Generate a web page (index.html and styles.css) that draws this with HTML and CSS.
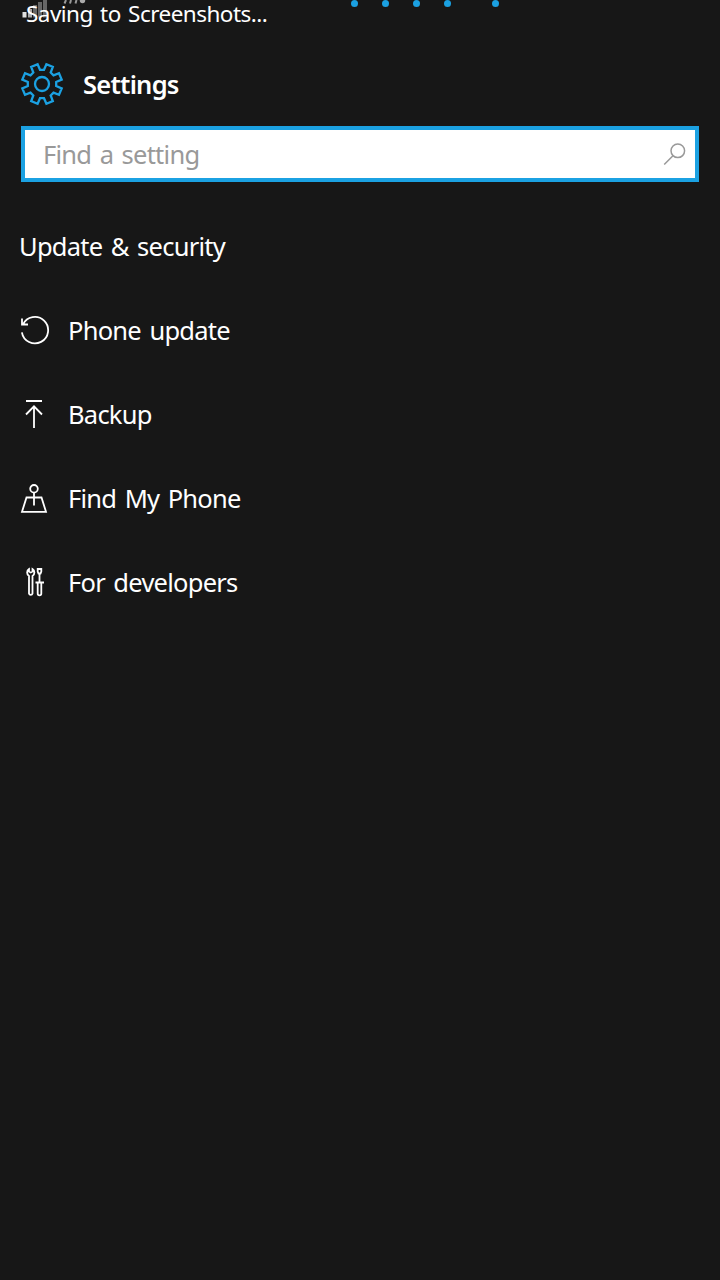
FILE: index.html
```html
<!DOCTYPE html>
<html lang="en">
<head>
    <meta charset="UTF-8">
    <meta name="viewport" content="width=device-width, initial-scale=1.0">
    <title>Settings</title>
    <link rel="stylesheet" href="styles.css">
</head>
<body>

<!-- Status bar with the toast sliding over it -->
<div class="status-bar">
    <svg class="signal" width="90" height="28" viewBox="0 0 90 28">
        <rect x="22.500" y="12" width="4" height="5.500" fill="#e0e0e0"/>
        <rect x="28" y="9" width="4" height="8.500" fill="#aaa"/>
        <rect x="33" y="5" width="4" height="12.500" fill="#666"/>
        <rect x="38" y="2" width="4" height="15.500" fill="#666"/>
        <rect x="43" y="0" width="4" height="17.500" fill="#666"/>
        <path d="M66 0l-1.500 3.500M71 0l-1 3.500M76.500 0l-1 3.500" fill="none" stroke="#999" stroke-width="2"/>
        <circle cx="82.500" cy="0.500" r="2.700" fill="#aaa"/>
    </svg>
    <span class="toast">Saving to Screenshots...</span>
    <span class="dot dot1"></span>
    <span class="dot dot2"></span>
    <span class="dot dot3"></span>
    <span class="dot dot4"></span>
    <span class="dot dot5"></span>
</div>

<header>
    <svg class="gear" width="44" height="44" viewBox="-22 -22 44 44">
        <path d="M2-14.200L4.400-19.700L10.800-17L8.700-11.500L11.500-8.700L17-10.800L19.700-4.400L14.200-2V2L19.700 4.400L17 10.800L11.500 8.700L8.700 11.500L10.800 17L4.400 19.700L2 14.200H-2L-4.400 19.700L-10.800 17L-8.700 11.500L-11.500 8.700L-17 10.800L-19.700 4.400L-14.200 2V-2L-19.700-4.400L-17-10.800L-11.500-8.700L-8.700-11.500L-10.800-17L-4.400-19.700L-2-14.200Z"/>
        <circle r="7"/>
    </svg>
    <h1>Settings</h1>
</header>

<div class="search">
    <input type="text" placeholder="Find a setting">
    <svg width="24" height="24" viewBox="0 0 24 24">
        <circle cx="14.800" cy="8.800" r="6.800"/>
        <path d="M10 13.700L1.200 22.500"/>
    </svg>
</div>

<h2>Update &amp; security</h2>

<ul class="menu">
    <li>
        <svg width="30" height="30" viewBox="0 0 30 30">
            <path d="M3 9.500A13.200 13.200 0 1 1 1.900 17.300M2 3.500V9.500H8"/>
        </svg>
        <span>Phone update</span>
    </li>
    <li>
        <svg width="30" height="30" viewBox="0 0 30 30">
            <path d="M6 2H22M14 7V29M6 15.500L14 7.300L22 15.500"/>
        </svg>
        <span>Backup</span>
    </li>
    <li>
        <svg width="30" height="30" viewBox="0 0 30 30">
            <circle cx="14" cy="5.800" r="3.800"/>
            <path d="M14 9.800V22.500M14 14.500H6.500L2 28.800H26L21.500 14.500H14"/>
        </svg>
        <span>Find My Phone</span>
    </li>
    <li>
        <svg width="30" height="30" viewBox="0 0 30 30">
            <path d="M9 2C6.500 3.500 6.500 7.500 9 9V26.500A1.800 1.800 0 0 0 12.500 26.500V9C15 7.500 15 3.500 12.500 2V4.500L10.750 5.500L9 4.500Z"/>
            <path d="M17.700 2H21.300V4.500L20.500 6.500H18.500L17.700 4.500ZM19.500 6.500V15.500M15.500 15.500H24M17.700 15.500V26.500A1.800 1.800 0 0 0 21.300 26.500V15.500"/>
        </svg>
        <span>For developers</span>
    </li>
</ul>

</body>
</html>
```

FILE: styles.css
```css
* {
    box-sizing: border-box;
}
body {
    font-family: "Noto Sans", "Open Sans", sans-serif;
    margin: 0;
    min-height: 1280px;
    background-color: #171717;
    color: white;
    font-size: 25.5px;
    letter-spacing: -0.75px;
    word-spacing: 2.5px;
}
.status-bar {
    position: relative;
    height: 60px;
}
.signal {
    position: absolute;
    left: 0;
    top: 0;
}
.toast {
    position: absolute;
    left: 26px;
    top: 0;
    font-size: 22.5px;
    line-height: 28px;
    letter-spacing: -0.53px;
    word-spacing: 2px;
    white-space: nowrap;
}
.dot {
    position: absolute;
    top: 0;
    width: 7px;
    height: 7px;
    border-radius: 50%;
    background-color: #1ba1e2;
}
.dot1 { left: 351px; }
.dot2 { left: 382px; }
.dot3 { left: 413px; }
.dot4 { left: 444px; }
.dot5 { left: 492px; }
header {
    display: flex;
    align-items: center;
    height: 48px;
    padding-left: 20px;
}
.gear {
    fill: none;
    stroke: #1ba1e2;
    stroke-width: 2.3;
}
h1 {
    margin: 0 0 0 19px;
    font-size: 25.5px;
    font-weight: 600;
    line-height: 46px;
    letter-spacing: -0.75px;
}
.search {
    display: flex;
    align-items: center;
    height: 56px;
    margin: 18px 21px 0;
    padding: 0 8px 0 18px;
    border: 4px solid #1ba1e2;
    background-color: white;
}
.search input {
    flex: 1;
    min-width: 0;
    padding: 0 0 1px;
    border: none;
    outline: none;
    font: inherit;
    letter-spacing: inherit;
    word-spacing: inherit;
    color: #333;
}
.search input::placeholder {
    color: #999;
}
.search svg {
    fill: none;
    stroke: #999;
    stroke-width: 1.5;
}
h2 {
    margin: 43px 0 0 19px;
    font-size: 25.5px;
    font-weight: 400;
    line-height: 42px;
}
.menu {
    list-style-type: none;
    margin: 21px 0 0;
    padding: 0;
}
.menu li {
    display: flex;
    align-items: center;
    height: 84px;
    padding-left: 20px;
    white-space: nowrap;
}
.menu svg {
    margin-right: 18px;
    fill: none;
    stroke: white;
    stroke-width: 1.8;
}
```
